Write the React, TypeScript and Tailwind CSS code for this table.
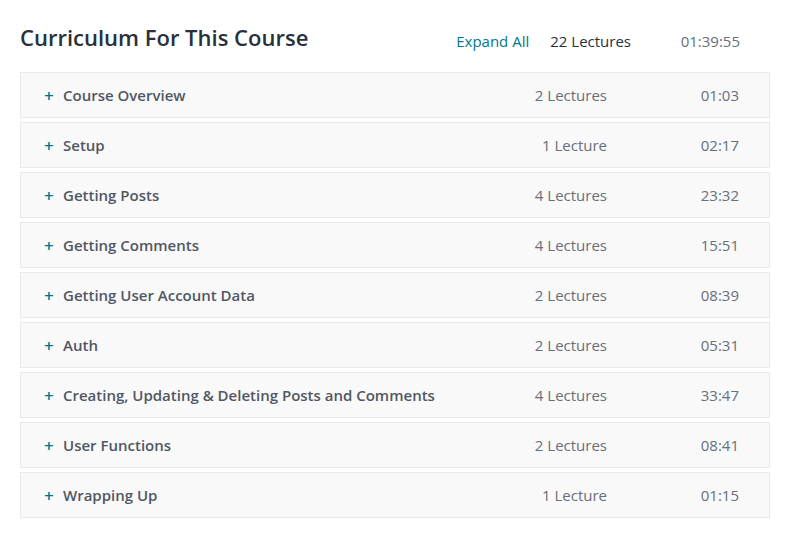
import React from "react";

const sections = [
  { title: "Course Overview", lectures: "2 Lectures", time: "01:03" },
  { title: "Setup", lectures: "1 Lecture", time: "02:17" },
  { title: "Getting Posts", lectures: "4 Lectures", time: "23:32" },
  { title: "Getting Comments", lectures: "4 Lectures", time: "15:51" },
  { title: "Getting User Account Data", lectures: "2 Lectures", time: "08:39" },
  { title: "Auth", lectures: "2 Lectures", time: "05:31" },
  { title: "Creating, Updating & Deleting Posts and Comments", lectures: "4 Lectures", time: "33:47" },
  { title: "User Functions", lectures: "2 Lectures", time: "08:41" },
  { title: "Wrapping Up", lectures: "1 Lecture", time: "01:15" },
];

export default function App() {
  return (
    <div
      className="min-h-[535px] w-[789px] bg-white px-[20px] pt-[21px] text-[#29303b]"
      style={{ fontFamily: '"Open Sans", "Liberation Sans", sans-serif' }}
    >
      {/* Header */}
      <div className="flex items-baseline w-[750px]">
        <h2 className="text-[22px] leading-[32px] font-semibold text-[#29303b]">
          Curriculum For This Course
        </h2>
        <div className="ml-auto flex items-baseline pr-[30px] text-[15px] translate-y-[1px]">
          <span className="text-[#007791]">Expand All</span>
          <span className="ml-[21px] text-[#29303b]">22 Lectures</span>
          <span className="w-[109px] text-right text-[#686f7a]">01:39:55</span>
        </div>
      </div>

      {/* Sections */}
      <div className="mt-[19px] flex flex-col gap-[4px] w-[750px]">
        {sections.map((s, i) => (
          <div
            key={i}
            className="flex h-[46px] items-center border border-[#e8e9eb] bg-[#f9f9f9] pl-[23px] pr-[30px] text-[15px]"
          >
            <span className="w-[19px] text-[17px] leading-none font-semibold text-[#007791]">+</span>
            <span className="font-semibold text-[#505763]">{s.title}</span>
            <span className="ml-auto text-[#686f7a]">{s.lectures}</span>
            <span className="w-[132px] text-right text-[#686f7a]">{s.time}</span>
          </div>
        ))}
      </div>
    </div>
  );
}
